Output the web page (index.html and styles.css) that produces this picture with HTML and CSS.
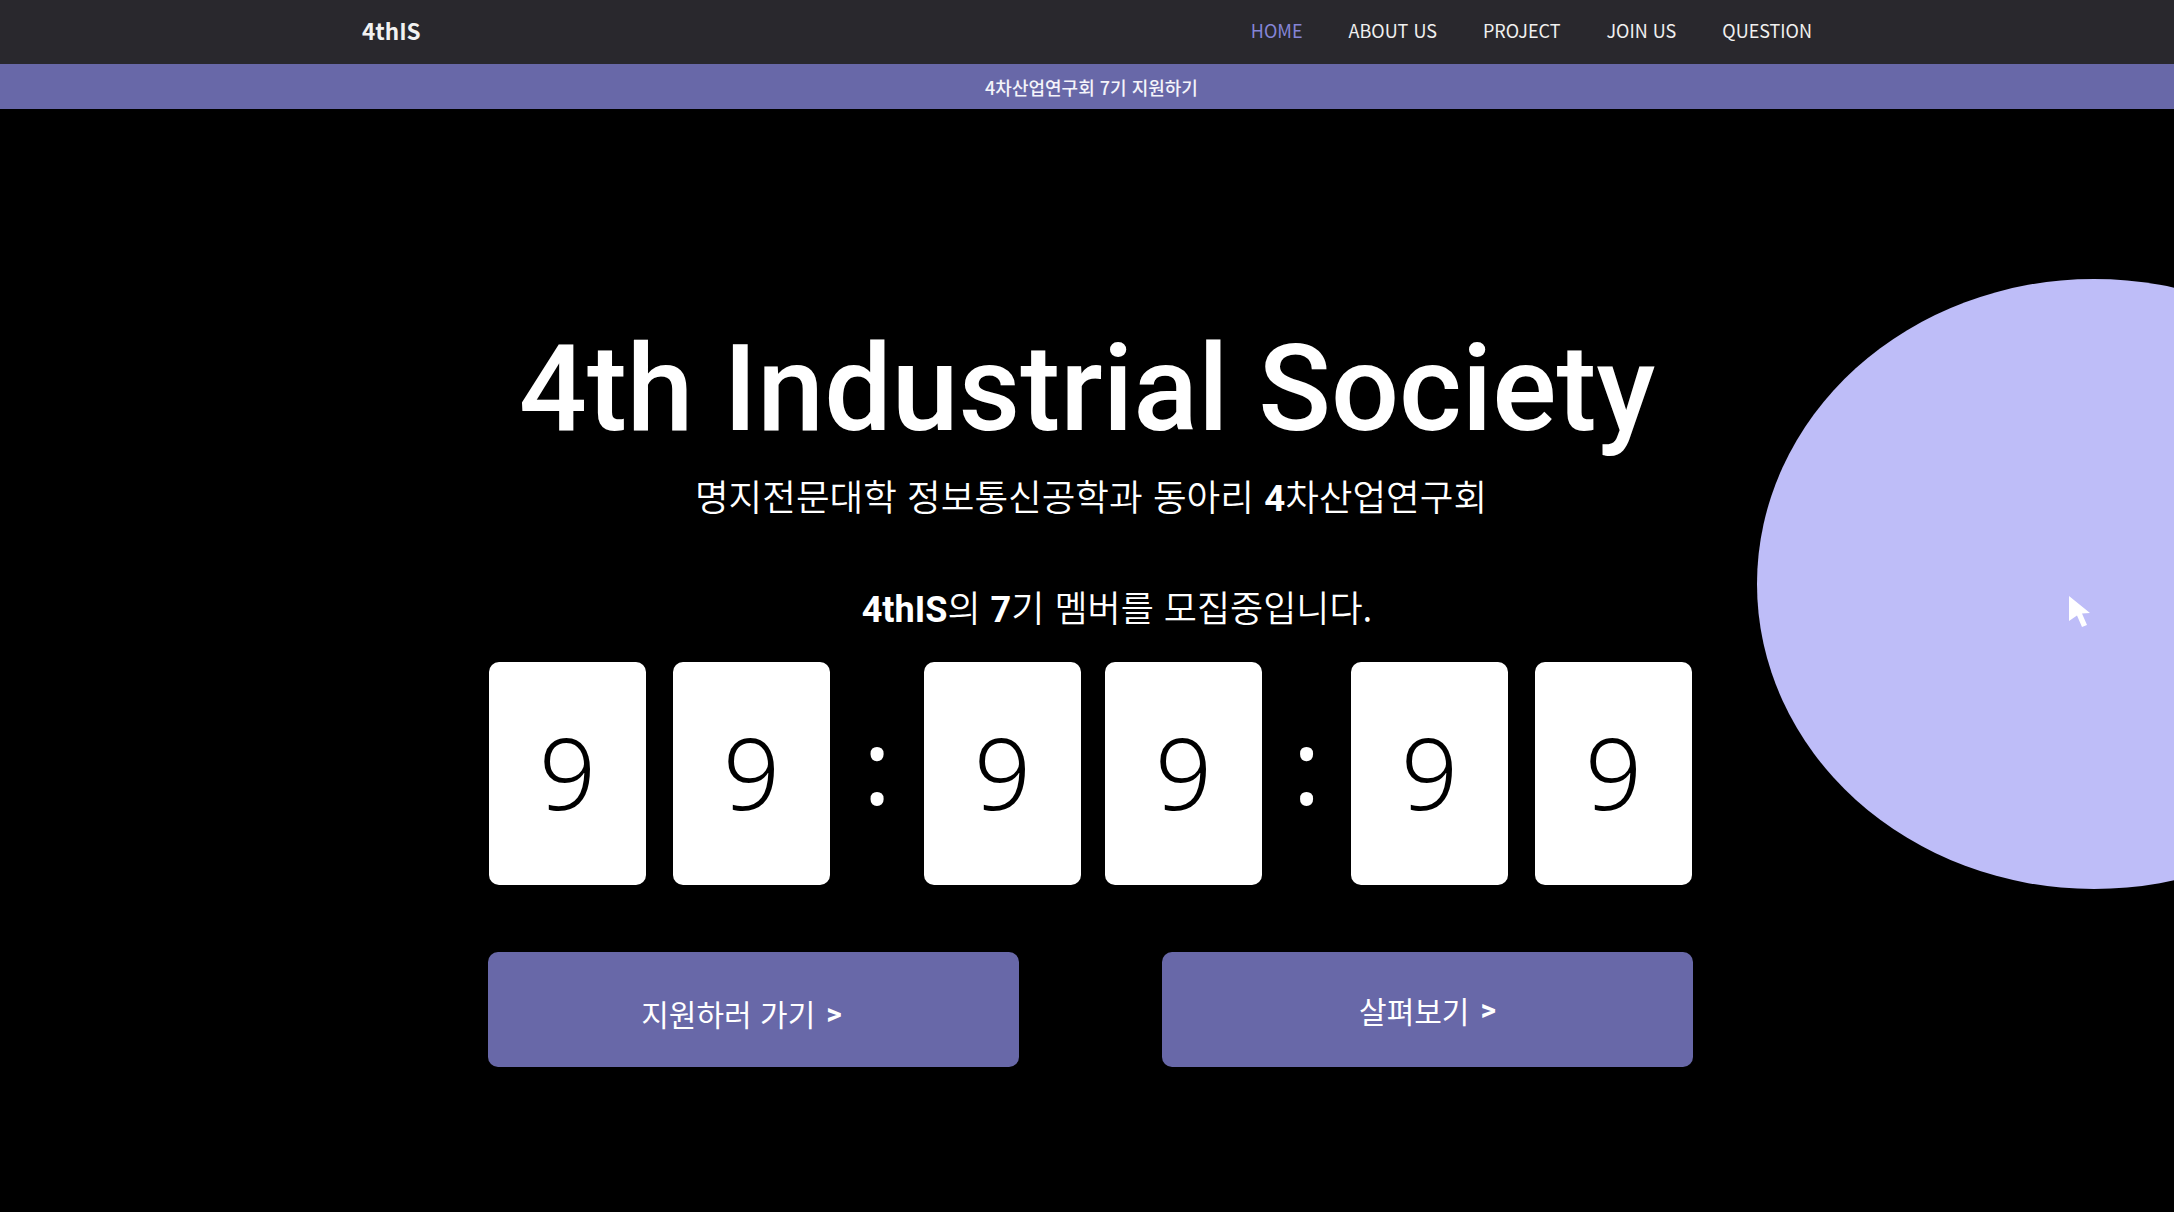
FILE: index.html
```html
<!DOCTYPE html>
<html lang="ko">
<head>
<meta charset="utf-8">
<title>4thIS</title>
<link rel="stylesheet" href="styles.css">
</head>
<body>
<header class="topbar">
  <div class="topbar-inner">
    <a class="logo" href="#">4thIS</a>
    <nav class="menu">
      <a class="menu-item active" href="#">HOME</a>
      <a class="menu-item" href="#">ABOUT US</a>
      <a class="menu-item" href="#">PROJECT</a>
      <a class="menu-item" href="#">JOIN US</a>
      <a class="menu-item" href="#">QUESTION</a>
    </nav>
  </div>
</header>
<div class="notice">4차산업연구회 7기 지원하기</div>
<main class="hero">
  <div class="blob"></div>
  <svg class="cursor" width="22" height="33" viewBox="0 0 22 33"><polygon points="0,0 21,17 13,17.5 18,29 13,31 8,19.5 0,25" fill="#ffffff"/></svg>
  <h1 class="title">4th Industrial Society</h1>
  <p class="subtitle">명지전문대학 정보통신공학과 동아리 <b>4</b>차산업연구회</p>
  <p class="recruit"><b>4thIS</b>의 <b>7</b>기 멤버를 모집중입니다.</p>
  <div class="countdown">
    <div class="pair">
      <div class="card">9</div>
      <div class="card">9</div>
    </div>
    <div class="colon">:</div>
    <div class="pair pair-mid">
      <div class="card">9</div>
      <div class="card">9</div>
    </div>
    <div class="colon colon-narrow">:</div>
    <div class="pair">
      <div class="card">9</div>
      <div class="card">9</div>
    </div>
  </div>
  <div class="actions">
    <a class="btn btn-apply" href="#">지원하러 가기<b>&gt;</b></a>
    <a class="btn btn-look" href="#">살펴보기<b>&gt;</b></a>
  </div>
</main>
</body>
</html>
```
FILE: styles.css
```css
* { box-sizing: border-box; }
html, body { margin: 0; padding: 0; }
body {
  background: #000;
  color: #fff;
  font-family: "Noto Sans CJK KR", "Noto Sans", sans-serif;
  overflow: hidden;
}
a { color: inherit; text-decoration: none; }

.topbar {
  height: 64px;
  background: #29282d;
}
.topbar-inner {
  width: 1450px;
  height: 100%;
  margin: 0 auto;
  padding-bottom: 4px;
  display: flex;
  align-items: center;
  justify-content: space-between;
}
.logo {
  font-size: 22.5px;
  font-weight: 700;
  color: #f2f2f2;
}
.menu {
  display: flex;
  gap: 46px;
}
.menu-item {
  font-size: 18px;
  color: #f0f0f0;
}
.menu-item.active { color: #8585d6; }

.notice {
  height: 45px;
  padding-left: 9px;
  background: #6868a8;
  display: flex;
  align-items: center;
  justify-content: center;
  font-size: 18px;
  font-weight: 500;
  color: #f4f4fa;
}

.hero {
  position: relative;
  height: calc(100vh - 109px);
  padding-top: 220px;
  display: flex;
  flex-direction: column;
  align-items: center;
}
.blob {
  position: absolute;
  left: 1757px;
  top: 170px;
  width: 674px;
  height: 610px;
  border-radius: 50%;
  background: #bebdf8;
}
.cursor {
  position: absolute;
  left: 2069px;
  top: 487px;
}
.title {
  position: relative;
  margin: 0;
  font-family: Roboto, sans-serif;
  font-weight: 500;
  font-size: 120px;
  line-height: 1;
}
.subtitle {
  position: relative;
  margin: 25px 0 0 8px;
  font-size: 36.6px;
  font-weight: 350;
  line-height: 1.2;
}
.recruit {
  position: relative;
  margin: 64px 0 0 60px;
  font-size: 36px;
  font-weight: 350;
  line-height: 1.2;
}
.subtitle b, .recruit b {
  font-family: Roboto, sans-serif;
  font-weight: 700;
}
.countdown {
  position: relative;
  margin: 30px 0 0 7px;
  display: flex;
  align-items: center;
}
.pair {
  display: flex;
  gap: 27px;
}
.pair-mid { gap: 24px; }
.card {
  width: 157px;
  height: 223px;
  padding-bottom: 6px;
  background: #fff;
  border-radius: 10px;
  color: #000;
  font-family: "Noto Sans", sans-serif;
  font-weight: 350;
  font-size: 100px;
  display: flex;
  align-items: center;
  justify-content: center;
  line-height: 1;
}
.colon {
  width: 94px;
  text-align: center;
  font-family: "Noto Sans", sans-serif;
  font-size: 105px;
  line-height: 1;
  transform: translateY(-9px);
}
.colon-narrow { width: 89px; }
.actions {
  position: relative;
  margin: 67px 0 0 7px;
  width: 1205px;
  display: flex;
  justify-content: space-between;
}
.btn {
  width: 531px;
  height: 115px;
  background: #6868a8;
  border-radius: 10px;
  display: flex;
  align-items: center;
  justify-content: center;
  font-size: 30px;
  color: #fff;
}
.btn-apply { padding: 7px 24px 0 0; }
.btn b { font-family: Roboto, sans-serif; font-weight: 700; margin-left: 11px; }
```
